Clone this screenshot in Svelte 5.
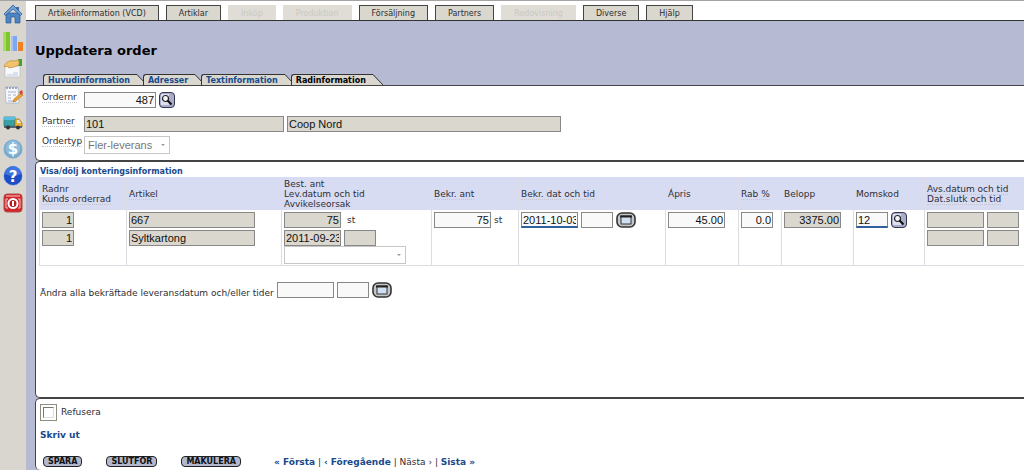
<script lang="ts">
  type NavItem = { label: string; disabled?: boolean };

  const navItems: NavItem[] = [
    { label: 'Artikelinformation (VCD)' },
    { label: 'Artiklar' },
    { label: 'Inköp', disabled: true },
    { label: 'Produktion', disabled: true },
    { label: 'Försäljning' },
    { label: 'Partners' },
    { label: 'Redovisning', disabled: true },
    { label: 'Diverse' },
    { label: 'Hjälp' }
  ];

  const tabs = ['Huvudinformation', 'Adresser', 'Textinformation', 'Radinformation'];
  let activeTab = $state('Radinformation');

  let orderNo = $state('487');
  let confirmedQty = $state('75');
  let confirmedDate = $state('2011-10-03');
  let confirmedTime = $state('');
  let price = $state('45.00');
  let discount = $state('0.0');
  let vatCode = $state('12');
  let allDate = $state('');
  let allTime = $state('');
  let refused = $state(false);
</script>

{#snippet searchButton(label: string)}
  <button class="search-btn" type="button" aria-label={label}>
    <svg viewBox="0 0 14 14" width="16" height="16">
      <rect x="1" y="1" width="8" height="11" fill="#dcdfee" />
      <circle cx="5.5" cy="5.5" r="3" fill="#f6f7fb" stroke="#222" stroke-width="1.2" />
      <path d="M7.5 7.500l4 4" stroke="#111" stroke-width="2.2" />
    </svg>
  </button>
{/snippet}

{#snippet calendarButton(label: string)}
  <button class="calendar-btn" type="button" aria-label={label}>
    <svg viewBox="0 0 20 16" width="20" height="16">
      <rect x="1" y="1" width="18" height="14" rx="5" fill="#c5c6c8" stroke="#333" stroke-width="1.6" />
      <rect x="5" y="4" width="10" height="8" fill="#cfe0f2" stroke="#333" />
      <path d="M4 4.5h12" stroke="#222" stroke-width="2" />
    </svg>
  </button>
{/snippet}

<div class="app">
  <aside class="sidebar">
    <a href="#home" aria-label="Hem">
      <svg viewBox="0 0 20 20">
        <path d="M13 3h3v5h-3z" fill="#3f6ea8" />
        <path d="M3 9h14v10h-5v-6H8v6H3z" fill="#4d84c4" stroke="#2c5a92" stroke-width=".7" />
        <path d="M10 1L1 10l1.500 1.500L10 5l7.500 6.500L19 10z" fill="#71a2d8" stroke="#2c5a92" stroke-width=".8" />
      </svg>
    </a>
    <a href="#statistik" aria-label="Statistik">
      <svg viewBox="0 0 20 20">
        <path d="M0 1h7v19H0z" fill="#7fc62c" />
        <path d="M0 1h3v19H0z" fill="#a3de58" />
        <path d="M8 5h6v15H8z" fill="#7fa9ee" />
        <path d="M8 5h2v15H8z" fill="#a5c4f7" />
        <path d="M15 11h5v9h-5z" fill="#ee8427" />
      </svg>
    </a>
    <a href="#kort" aria-label="Kort">
      <svg viewBox="0 0 20 20">
        <path d="M2 8h15v11H2z" fill="#f7f8fa" stroke="#b5bcc5" stroke-width=".7" />
        <path d="M10 15h5M4 17h11" stroke="#b9cbe0" />
        <path d="M15 1h4v7h-4z" fill="#35a63d" />
        <path d="M1 8c2-4 6-6 10-5l5-1v5l-5 2-5 1-1-2-3 1z" fill="#f1c36d" stroke="#bf8934" stroke-width=".7" />
      </svg>
    </a>
    <a href="#anteckningar" aria-label="Anteckningar">
      <svg viewBox="0 0 20 20">
        <path d="M2 2h13l1 16H3z" fill="#f5f7fb" stroke="#a3afc1" stroke-width=".7" />
        <path d="M4 2v2M7 2v2M10 2v2M13 2v2" stroke="#49648f" />
        <path d="M5 7h8M5 10h3M10 10h3M5 13h3M5 16h8" stroke="#a5b3cb" />
        <path d="M18 8l-7 6-1 3 3-1 7-6z" fill="#efa235" stroke="#b86b20" stroke-width=".6" />
        <path d="M16 7l3-2 1 3-2 2z" fill="#cf4934" />
      </svg>
    </a>
    <a href="#leverans" aria-label="Leverans">
      <svg viewBox="0 0 20 20">
        <path d="M1 5h11v9H1z" fill="#3aa0a6" stroke="#23717e" stroke-width=".7" />
        <path d="M1 5h11v3H1z" fill="#58bfe0" />
        <path d="M12 7h4l3 4v4h-7z" fill="#efb22e" stroke="#9b701c" stroke-width=".7" />
        <path d="M14 8h2l2 3h-4z" fill="#d7edf6" />
        <path d="M1 14h18v2H1z" fill="#596273" />
        <circle cx="5" cy="15.500" r="2" fill="#30343b" />
        <circle cx="15" cy="15.500" r="2" fill="#30343b" />
      </svg>
    </a>
    <a href="#ekonomi" aria-label="Ekonomi">
      <svg viewBox="0 0 20 20">
        <circle cx="10" cy="10" r="9.500" fill="#79a9cd" />
        <circle cx="10" cy="9" r="7.500" fill="#8fbbdb" />
        <text x="10" y="15" text-anchor="middle" class="glyph">$</text>
      </svg>
    </a>
    <a href="#hjalp" aria-label="Hjälp">
      <svg viewBox="0 0 20 20">
        <circle cx="10" cy="10" r="9.500" fill="#1c4fc4" stroke="#d5def2" stroke-width=".6" />
        <path d="M2 8a8 8 0 0 1 16 0q-8 4-16 0" fill="#3d74e0" />
        <text x="10" y="15.500" text-anchor="middle" class="glyph">?</text>
      </svg>
    </a>
    <a href="#logga-ut" aria-label="Logga ut">
      <svg viewBox="0 0 20 20">
        <rect x="1" y="1" width="18" height="18" rx="3" fill="#cf272b" stroke="#b5484b" />
        <path d="M3 3h14" stroke="#e8777a" stroke-width="2" />
        <path d="M5 6H3v9h2M15 6h2v9h-2" fill="none" stroke="#f4c5c5" />
        <circle cx="10" cy="10.500" r="4.500" fill="#b51d22" stroke="#fff" stroke-width="2" />
        <path d="M10 8v5" stroke="#fff" stroke-width="2" />
      </svg>
    </a>
  </aside>

  <div class="content">
    <nav class="top-nav">
      {#each navItems as item}
        <button type="button" disabled={item.disabled}>{item.label}</button>
      {/each}
    </nav>

    <main>
      <h1>Uppdatera order</h1>

      <div class="tabs" role="tablist">
        {#each tabs as tab}
          <button
            type="button"
            class="tab"
            role="tab"
            class:active={tab === activeTab}
            aria-selected={tab === activeTab}
            onclick={() => (activeTab = tab)}
          >
            <span>{tab}</span>
            <svg viewBox="0 0 11 11" width="11" height="11">
              <path d="M0 .5L11 11H0z" fill="#d9d7ce" />
              <path d="M0 .5h1L11 11" fill="none" stroke="#333" />
            </svg>
          </button>
        {/each}
      </div>

      <section class="panel order-panel">
        <label for="orderNo"><span class="hint">Ordernr</span></label>
        <div class="fields">
          <input id="orderNo" class="order-no num" bind:value={orderNo} />
          {@render searchButton('Sök order')}
        </div>
        <label for="partner"><span class="hint">Partner</span></label>
        <div class="fields">
          <input id="partner" class="partner-no" value="101" readonly />
          <input class="partner-name" value="Coop Nord" aria-label="Partnernamn" readonly />
        </div>
        <label for="orderType"><span class="hint">Ordertyp</span></label>
        <div class="select order-type">
          <select id="orderType" disabled>
            <option>Fler-leverans</option>
          </select>
        </div>
      </section>

      <section class="panel rows-panel">
        <a class="toggle" href="#kontering">Visa/dölj konteringsinformation</a>
        <table>
          <colgroup>
            <col class="c-row" />
            <col class="c-article" />
            <col class="c-ordered" />
            <col class="c-qty" />
            <col class="c-date" />
            <col class="c-price" />
            <col class="c-discount" />
            <col class="c-amount" />
            <col class="c-vat" />
            <col />
          </colgroup>
          <thead>
            <tr>
              <th>Radnr<br /><span class="hint">Kunds orderrad</span></th>
              <th><span class="hint">Artikel</span></th>
              <th>Best. ant<br />Lev.datum och tid<br />Avvikelseorsak</th>
              <th><span class="hint">Bekr. ant</span></th>
              <th><span class="hint">Bekr. dat och tid</span></th>
              <th>Ápris</th>
              <th><span class="hint">Rab %</span></th>
              <th>Belopp</th>
              <th>Momskod</th>
              <th><span class="hint">Avs.datum och tid</span><br /><span class="hint">Dat.slutk och tid</span></th>
            </tr>
          </thead>
          <tbody>
            <tr>
              <td>
                <div class="stack">
                  <input class="short num" value="1" aria-label="Radnr" readonly />
                  <input class="short num" value="1" aria-label="Kunds orderrad" readonly />
                </div>
              </td>
              <td>
                <div class="stack">
                  <input class="article" value="667" aria-label="Artikel" readonly />
                  <input class="article" value="Syltkartong" aria-label="Benämning" readonly />
                </div>
              </td>
              <td>
                <div class="stack">
                  <div class="fields">
                    <input class="date num" value="75" aria-label="Best. ant" readonly />
                    <span class="unit">st</span>
                  </div>
                  <div class="fields">
                    <input class="date" value="2011-09-23" aria-label="Lev.datum" readonly />
                    <input class="short" value="" aria-label="Lev.tid" readonly />
                  </div>
                </div>
                <div class="select reason">
                  <select aria-label="Avvikelseorsak" disabled>
                    <option></option>
                  </select>
                </div>
              </td>
              <td>
                <div class="fields">
                  <input class="date num" bind:value={confirmedQty} aria-label="Bekr. ant" />
                  <span>st</span>
                </div>
              </td>
              <td>
                <div class="fields">
                  <input class="date changed" bind:value={confirmedDate} aria-label="Bekr. datum" />
                  <input class="short" bind:value={confirmedTime} aria-label="Bekr. tid" />
                  {@render calendarButton('Välj datum')}
                </div>
              </td>
              <td><input class="date num" bind:value={price} aria-label="Ápris" /></td>
              <td><input class="short num" bind:value={discount} aria-label="Rab %" /></td>
              <td><input class="date num" value="3375.00" aria-label="Belopp" readonly /></td>
              <td>
                <div class="fields">
                  <input class="short changed" bind:value={vatCode} aria-label="Momskod" />
                  {@render searchButton('Sök momskod')}
                </div>
              </td>
              <td>
                <div class="stack">
                  <div class="fields">
                    <input class="date" value="" aria-label="Avs.datum" readonly />
                    <input class="short" value="" aria-label="Avs.tid" readonly />
                  </div>
                  <div class="fields">
                    <input class="date" value="" aria-label="Dat.slutk" readonly />
                    <input class="short" value="" aria-label="Tid slutk" readonly />
                  </div>
                </div>
              </td>
            </tr>
          </tbody>
        </table>

        <div class="change-all">
          <label for="allDate">Ändra alla bekräftade leveransdatum och/eller tider</label>
          <input id="allDate" class="date" bind:value={allDate} />
          <input class="short" bind:value={allTime} aria-label="Tid" />
          {@render calendarButton('Välj datum')}
        </div>
      </section>

      <section class="panel footer-panel">
        <label class="refuse">
          <input type="checkbox" bind:checked={refused} />
          Refusera
        </label>
        <a class="print" href="#skriv-ut">Skriv ut</a>
        <div class="actions">
          <button type="button">SPARA</button>
          <button type="button">SLUTFÖR</button>
          <button type="button">MAKULERA</button>
          <div class="pager">
            <a href="#forsta">« Första</a> | <a href="#foregaende">‹ Föregående</a> | <span>Nästa ›</span> | <a href="#sista">Sista »</a>
          </div>
        </div>
      </section>
    </main>
  </div>
</div>

<style>
  :global(body) {
    background: #b6bbd3;
  }

  .app {
    display: flex;
    min-height: 100vh;
    box-sizing: border-box;
    border-top: 1px solid #a5a3a3;
    font-family: 'DejaVu Sans', Verdana, sans-serif;
    font-size: 9px;
    line-height: 10px;
    color: #2e2e36;
  }

  button {
    font-family: inherit;
    padding: 0;
    margin: 0;
    cursor: pointer;
  }

  a {
    color: #174a8c;
    font-weight: bold;
    text-decoration: none;
  }

  .sidebar {
    flex: none;
    display: flex;
    flex-direction: column;
    gap: 7px;
    width: 26px;
    box-sizing: border-box;
    padding: 3px 3px 0;
    background: #d9d6d0;
  }

  .sidebar a,
  .sidebar svg {
    display: block;
    width: 20px;
    height: 20px;
  }

  .glyph {
    font-size: 15px;
    font-weight: bold;
    fill: #fff;
  }

  .content {
    flex: 1;
    min-width: 0;
    display: flex;
    flex-direction: column;
    background: #b6bbd3;
  }

  .top-nav {
    display: flex;
    gap: 7px;
    padding: 4px 0 0 9px;
    background: #fff;
    border-bottom: 1px solid #333;
  }

  .top-nav button {
    height: 15px;
    padding: 1px 12px 0;
    border: 1px solid #444;
    border-bottom: 0;
    background: #d9d7ce;
    color: #2e2e2e;
    font-size: 8px;
    line-height: 13px;
  }

  .top-nav button:disabled {
    border-color: #dfddd6;
    background: #dfddd6;
    color: #cac8c1;
    cursor: default;
  }

  main {
    flex: 1;
    display: flex;
    flex-direction: column;
    padding-left: 9px;
  }

  h1 {
    margin: 22px 0 15px;
    font-size: 13px;
    line-height: 16px;
    color: #000;
  }

  .tabs {
    display: flex;
    padding-left: 8px;
  }

  .tab {
    display: flex;
    height: 11px;
    border: 0;
    background: none;
    color: #174a8c;
    font-size: 8px;
    font-weight: bold;
    line-height: 11px;
  }

  .tab + .tab {
    margin-left: -4px;
  }

  .tab span {
    padding: 0 6px 0 4px;
    border-top: 1px solid #333;
    border-left: 1px solid #333;
    border-top-left-radius: 3px;
    background: #d9d7ce;
  }

  .tab.active {
    color: #000;
  }

  .panel {
    box-sizing: border-box;
    padding-left: 4px;
    border: 1px solid #444;
    border-right: 0;
    border-radius: 5px 0 0 5px;
    background: #fff;
  }

  input {
    box-sizing: border-box;
    height: 16px;
    margin: 0;
    padding: 0 1px;
    border: 1px solid #888;
    border-radius: 0;
    background: #f9f9f9;
    color: #111;
    font-family: 'Liberation Sans', Arial, sans-serif;
    font-size: 11px;
  }

  input:read-only:not([type='checkbox']) {
    background: #d9d7ce;
  }

  .num {
    text-align: right;
  }

  .changed {
    border-bottom: 2px solid #2f619c;
  }

  .short {
    width: 32px;
  }

  .date {
    width: 57px;
  }

  .article {
    width: 126px;
  }

  .fields {
    display: flex;
    align-items: center;
    gap: 3px;
  }

  .stack {
    display: flex;
    flex-direction: column;
    gap: 2px;
  }

  .unit {
    padding-left: 3px;
  }

  .hint {
    border-bottom: 1px dotted #c4c4cc;
  }

  .search-btn,
  .calendar-btn {
    flex: none;
    display: block;
    height: 16px;
    border: 0;
    background: none;
  }

  .search-btn svg {
    box-sizing: border-box;
    border: 1px solid #34364c;
    border-radius: 4px;
    background: #a9accb;
  }

  .search-btn svg,
  .calendar-btn svg {
    display: block;
  }

  .select {
    position: relative;
  }

  .select::after {
    content: '';
    position: absolute;
    top: 8px;
    right: 5px;
    border: 2px solid transparent;
    border-top-color: #999;
    border-bottom: 0;
  }

  select {
    display: block;
    width: 100%;
    height: 18px;
    margin: 0;
    padding: 0 3px;
    border: 1px solid #c6c6c6;
    border-radius: 0;
    background: #fff;
    color: #777;
    opacity: 1;
    appearance: none;
    font-family: 'Liberation Sans', Arial, sans-serif;
    font-size: 11px;
  }

  .order-panel {
    display: grid;
    grid-template-columns: 42px 1fr;
    align-items: start;
    padding: 6px 0 6px 6px;
  }

  .order-panel .fields {
    padding-bottom: 8px;
  }

  .order-panel .fields + label + .fields {
    padding-bottom: 4px;
  }

  .order-no {
    width: 72px;
  }

  .partner-no {
    width: 200px;
  }

  .partner-name {
    width: 274px;
  }

  .order-type {
    width: 86px;
  }

  .rows-panel {
    padding: 4px 0 99px 3px;
  }

  .toggle {
    display: block;
    padding-left: 1px;
    font-size: 8px;
    line-height: 11px;
  }

  table {
    width: 100%;
    table-layout: fixed;
    border-collapse: collapse;
  }

  .c-row { width: 87px; }
  .c-article { width: 155px; }
  .c-ordered { width: 150px; }
  .c-qty { width: 87px; }
  .c-date { width: 147px; }
  .c-price { width: 73px; }
  .c-discount { width: 43px; }
  .c-amount { width: 72px; }
  .c-vat { width: 71px; }

  th,
  td {
    padding: 0 0 0 2px;
    border: 0 solid #dcdce2;
    border-left-width: 1px;
    text-align: left;
    white-space: nowrap;
  }

  th {
    height: 33px;
    background: #d7dcf2;
    font-weight: normal;
    vertical-align: middle;
  }

  td {
    padding-top: 2px;
    padding-bottom: 1px;
    border-bottom-width: 1px;
    vertical-align: top;
  }

  td > input {
    display: block;
  }

  .reason {
    width: 122px;
  }

  .change-all {
    display: flex;
    align-items: center;
    gap: 3px;
    padding: 16px 0 0 1px;
  }

  .change-all label {
    padding-top: 6px;
  }

  .footer-panel {
    flex: 1;
    border-bottom: 0;
    padding-top: 4px;
  }

  .refuse {
    display: flex;
    align-items: center;
    gap: 4px;
    height: 18px;
    line-height: 12px;
  }

  .refuse input {
    appearance: none;
    width: 17px;
    height: 17px;
    padding: 2px;
    border-color: #8d8d80;
    background: #fff;
  }

  .refuse input::before {
    content: '';
    display: block;
    box-sizing: border-box;
    width: 11px;
    height: 11px;
    border: 1px solid #ddd;
    border-top-color: #777;
    border-left-color: #777;
  }

  .refuse input:checked::before {
    background: #174a8c;
  }

  .print {
    display: block;
    padding-top: 9px;
  }

  .actions {
    display: flex;
    align-items: center;
    gap: 24px;
    padding: 16px 0 0 3px;
  }

  .actions button {
    height: 11px;
    padding: 0 4px;
    border: 1px solid #222;
    border-radius: 4px;
    background: #b3b8cd;
    color: #111;
    font-size: 8px;
    font-weight: bold;
    line-height: 9px;
  }

  .pager {
    padding-left: 9px;
    white-space: nowrap;
  }
</style>
